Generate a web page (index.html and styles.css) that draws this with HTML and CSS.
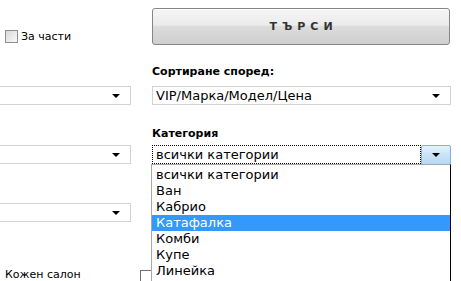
FILE: index.html
```html
<!DOCTYPE html>
<html lang="bg">
<head>
<meta charset="utf-8">
<title>Търсене</title>
<link rel="stylesheet" href="styles.css">
</head>
<body>
<div class="page">
  <div class="left">
    <label class="check-row"><span class="cb"></span>За части</label>
    <div class="sel sel-1"><span></span><span class="arrow"></span></div>
    <div class="sel sel-2"><span></span><span class="arrow"></span></div>
    <div class="sel sel-3"><span></span><span class="arrow"></span></div>
    <div class="leather">Кожен салон</div>
  </div>
  <div class="mid">
    <span class="cb cb-plain"></span>
  </div>
  <div class="right">
    <button class="search" type="button">ТЪРСИ</button>
    <div class="label label-sort">Сортиране според:</div>
    <div class="sel sel-sort"><span>VIP/Марка/Модел/Цена</span><span class="arrow"></span></div>
    <div class="label label-cat">Категория</div>
    <div class="combo">
      <div class="combo-box">
        <span class="combo-text">всички категории</span>
        <span class="combo-btn"><span class="arrow"></span></span>
      </div>
      <ul class="list">
        <li>всички категории</li>
        <li>Ван</li>
        <li>Кабрио</li>
        <li class="active">Катафалка</li>
        <li>Комби</li>
        <li>Купе</li>
        <li>Линейка</li>
      </ul>
    </div>
  </div>
</div>
</body>
</html>
```

FILE: styles.css
```css
* { box-sizing: border-box; }
html, body { margin: 0; padding: 0; background: #fff; }
body {
  width: 461px;
  height: 281px;
  overflow: hidden;
  font-family: "DejaVu Sans", Verdana, sans-serif;
  color: #000;
}
.page { display: flex; align-items: flex-start; }

.left { flex: none; width: 151px; margin-left: -20px; }
.mid { flex: none; width: 21px; padding-left: 9px; padding-top: 270px; }
.right { flex: none; width: 299px; position: relative; }

.check-row {
  display: flex;
  align-items: center;
  height: 13px;
  margin: 30px 0 0 25px;
  font-size: 11px;
  line-height: 13px;
}
.cb {
  flex: none;
  display: block;
  width: 13px;
  height: 13px;
  margin-right: 3px;
  border: 1px solid #8e8f8f;
  background: linear-gradient(135deg, #d8d8d8, #f9f9f9);
}
.cb-plain { border-color: #707070; background: #fff; }

.sel {
  display: flex;
  align-items: center;
  justify-content: space-between;
  height: 19px;
  padding: 0 10px 0 3px;
  border: 1px solid #d2d2d2;
  background: #fff;
  font-size: 13px;
  line-height: 17px;
}
.arrow {
  flex: none;
  width: 0;
  height: 0;
  border-left: 4px solid transparent;
  border-right: 4px solid transparent;
  border-top: 4px solid #000;
}
.sel-1 { margin-top: 43px; }
.sel-2 { margin-top: 40px; }
.sel-3 { margin-top: 39px; }
.leather {
  margin: 46px 0 0 25px;
  font-size: 11px;
  line-height: 13px;
}

.search {
  display: block;
  width: 298px;
  height: 37px;
  margin: 8px 0 0 0;
  padding: 0 0 0 5px;
  border: 1px solid #868686;
  border-radius: 3px;
  background: linear-gradient(#f6f6f6, #ebebeb 46%, #dcdcdc 50%, #cfcfcf);
  box-shadow: inset 0 1px 0 #fff;
  font-family: "DejaVu Sans", Verdana, sans-serif;
  font-weight: bold;
  font-size: 11px;
  letter-spacing: 5px;
  color: #333;
}

.label {
  font-weight: bold;
  font-size: 11px;
  line-height: 13px;
}
.label-sort { margin-top: 20px; }
.sel-sort { margin-top: 8px; padding-left: 3px; }
.label-cat { margin-top: 22px; }

.combo { position: relative; margin-top: 5px; }
.combo-box { display: flex; height: 19px; }
.combo-text {
  flex: none;
  width: 269px;
  height: 19px;
  padding-left: 3px;
  border: 1px dotted #000;
  font-size: 13px;
  line-height: 17px;
}
.combo-btn {
  flex: none;
  display: flex;
  align-items: center;
  justify-content: center;
  width: 30px;
  height: 20px;
  border: 1px solid #7fb2e2;
  border-radius: 2px;
  background: linear-gradient(#e6f2fc, #c9e3f7 50%, #b6d9f4);
}
.list {
  position: absolute;
  top: 19px;
  left: -1px;
  width: 300px;
  margin: 0;
  padding: 2px 0 40px 0;
  list-style: none;
  border-top: 1px solid #a8a8a8;
  border-left: 1px solid #a8a8a8;
  border-right: 1px solid #000;
  background: #fff;
  font-size: 13px;
  line-height: 16px;
}
.list li { height: 16px; padding-left: 4px; white-space: nowrap; }
.list li.active { background: #3399ff; color: #fff; }
```
